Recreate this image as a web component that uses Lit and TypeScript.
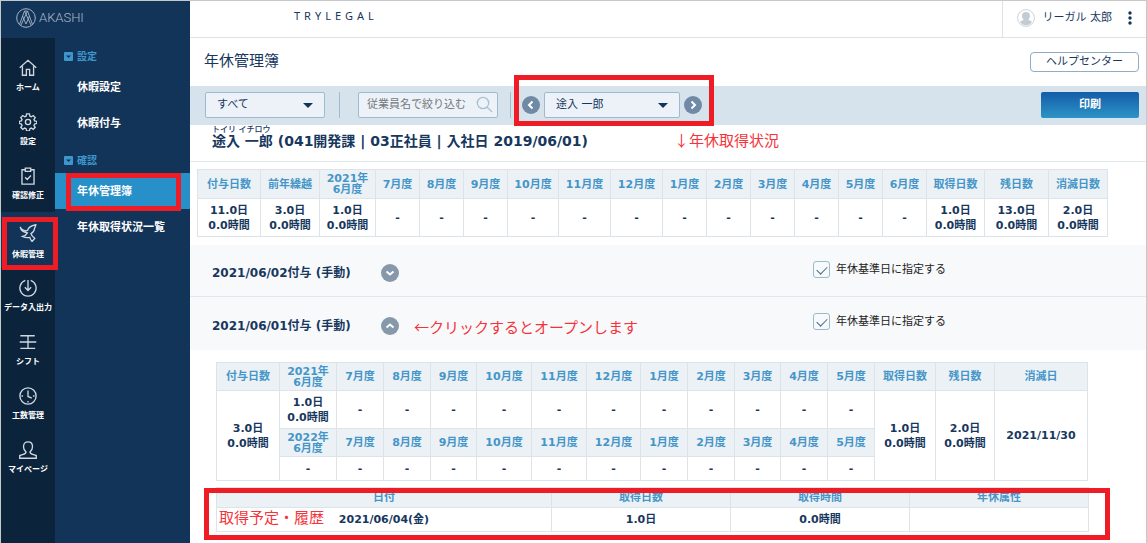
import { LitElement, html, css, svg, nothing } from "lit";
import { customElement, state } from "lit/decorators.js";
import { classMap } from "lit/directives/class-map.js";

interface NavItem {
  label: string;
  icon: unknown;
  active?: boolean;
  tall?: boolean;
}

const NAV: NavItem[] = [
  {
    label: "ホーム",
    icon: svg`<path d="M.8 9.800 10 1.500l9.200 8.300M3.800 8v10h4.400v-6.500h3.600V18h4.400V8"/>`,
  },
  {
    label: "設定",
    icon: svg`<circle cx="10" cy="10" r="2.900"/><path d="M8.400 1h3.200l.5 2.500 1.600.7 2.100-1.400 2.200 2.200-1.400 2.100.7 1.600 2.500.5v2.400l-2.500.6-.7 1.600 1.400 2.100-2.200 2.200-2.100-1.400-1.600.7-.5 2.400H8.400l-.5-2.400-1.600-.7-2.100 1.400-2.200-2.200 1.400-2.100-.7-1.600-2.400-.6V9.200l2.400-.5.7-1.600L2 5l2.200-2.200 2.100 1.400 1.600-.7z"/>`,
  },
  {
    label: "確認修正",
    tall: true,
    icon: svg`<path d="M7 3H3.300v16h13.400V3H13M7 1.200h6v3.600H7zM6.800 11.500l2.300 2.300 4.200-4.300"/>`,
  },
  {
    label: "休暇管理",
    tall: true,
    active: true,
    icon: svg`<path d="M1.300 3.200c1 2.600 3 3.800 6.400 4.600l2-1c.6-3.400 4-5 9-6-.3 2.200-1.200 2.800-1.500 4.500-.4 2.700-1.700 4.300-3.900 5.400.6 2.500 2 3.500 4.200 5.300l-3 3.500c-1.200-1-1.800-2.600-2.600-4.700-2.800.7-5.600.3-8-.9 2.300-.5 4.400-2.200 5.400-4.100C6 9.400 2.200 7.800 1.300 3.200z"/>`,
  },
  {
    label: "データ入出力",
    icon: svg`<path d="M7 1.500a9 9 0 1 0 6 0M10 1v11.500M6.500 9.200l3.500 3.500 3.500-3.500"/>`,
  },
  {
    label: "シフト",
    icon: svg`<path d="M1.500 3h16M.8 10h18.400M1.500 17h16.500M10 3v14"/>`,
  },
  {
    label: "工数管理",
    icon: svg`<circle cx="10" cy="10" r="9"/><path d="M10 3.800v6.700l4.200 1.800M2.800 10h1.700M15.500 10h1.700M10 15.500v1.700"/>`,
  },
  {
    label: "マイページ",
    icon: svg`<path d="M7.800 12.300C6 10.800 5 8.800 5 6.300 5 3 6.900 1 10 1s5 2 5 5.300c0 2.500-1 4.500-2.800 6 0 3 4.800 2.400 7 4v2.900H.8v-2.900c2.200-1.600 7-1 7-4z"/>`,
  },
];

const SUBMENU = [
  { title: "設定", items: ["休暇設定", "休暇付与"] },
  { title: "確認", items: ["年休管理簿", "年休取得状況一覧"] },
];

const DAY1 = ["1.0日", "0.0時間"];
const NONE = ["-"];

const SUMMARY: { head: string[]; value: string[]; width: number }[] = [
  { head: ["付与日数"], value: ["11.0日", "0.0時間"], width: 63 },
  { head: ["前年繰越"], value: ["3.0日", "0.0時間"], width: 59 },
  { head: ["2021年", "6月度"], value: DAY1, width: 56 },
  { head: ["7月度"], value: NONE, width: 44 },
  { head: ["8月度"], value: NONE, width: 44 },
  { head: ["9月度"], value: NONE, width: 44 },
  { head: ["10月度"], value: NONE, width: 51 },
  { head: ["11月度"], value: NONE, width: 52 },
  { head: ["12月度"], value: NONE, width: 52 },
  { head: ["1月度"], value: NONE, width: 44 },
  { head: ["2月度"], value: NONE, width: 44 },
  { head: ["3月度"], value: NONE, width: 44 },
  { head: ["4月度"], value: NONE, width: 44 },
  { head: ["5月度"], value: NONE, width: 44 },
  { head: ["6月度"], value: NONE, width: 44 },
  { head: ["取得日数"], value: DAY1, width: 58 },
  { head: ["残日数"], value: ["13.0日", "0.0時間"], width: 64 },
  { head: ["消滅日数"], value: ["2.0日", "0.0時間"], width: 59 },
];

const MONTHS = ["7月度", "8月度", "9月度", "10月度", "11月度", "12月度", "1月度", "2月度", "3月度", "4月度", "5月度"];
const DETAIL_WIDTHS = [63, 57, 47, 47, 46, 55, 55, 54, 47, 47, 46, 47, 47, 61, 59, 93];
const HISTORY_WIDTHS = [335, 179, 179, 179];

const lines = (parts: string[]) => parts.map((p, i) => html`${i ? html`<br />` : nothing}${p}`);
const cols = (widths: number[]) =>
  html`<colgroup>${widths.map((w) => html`<col style="width:${w}px" />`)}</colgroup>`;
const chevron = (d: string) =>
  html`<svg viewBox="0 0 18 18" width="18" height="18" aria-hidden="true"><circle cx="9" cy="9" r="9" /><path d=${d} /></svg>`;

@customElement("app-root")
export class AppRoot extends LitElement {
  @state() private open = true;

  static styles = css`
    :host {
      display: block;
      font-family: "DejaVu Sans", "Noto Sans CJK JP", sans-serif;
      font-size: 11px;
      line-height: 15px;
      color: #17375e;
    }
    * {
      box-sizing: border-box;
    }
    a {
      color: inherit;
      text-decoration: none;
    }
    button,
    input,
    select {
      font: inherit;
      color: inherit;
      margin: 0;
    }
    button {
      padding: 0;
      cursor: pointer;
    }
    svg {
      display: block;
    }
    .page {
      display: grid;
      grid-template-columns: 189px minmax(0, 1fr);
      min-height: 100vh;
      border: 1px solid #c6c8ca;
      background: #fff;
    }

    /* sidebar */
    .side {
      display: grid;
      grid-template: 37px 1fr / 54px 1fr;
      background: #123458;
      color: #fff;
    }
    .brand {
      grid-column: 1 / -1;
      display: flex;
      align-items: center;
      gap: 3px;
      padding-left: 15px;
      padding-bottom: 3px;
      font: 300 13px/20px Roboto, sans-serif;
      color: #a9b7c6;
    }
    .brand svg,
    .rail svg {
      fill: none;
      stroke: currentColor;
    }
    .rail {
      background: #0c233c;
      padding-top: 10px;
    }
    .rail a {
      display: flex;
      flex-direction: column;
      align-items: center;
      gap: 5px;
      height: 54px;
      padding-top: 11px;
      font-size: 8px;
      line-height: 12px;
      font-weight: 700;
      white-space: nowrap;
    }
    .rail a.tall {
      height: 56px;
      position: relative;
    }
    .rail a.active {
      background: #123458;
      padding-top: 12px;
      gap: 7px;
    }
    .rail svg {
      stroke-width: 1.5;
      color: #cfd8e0;
    }
    .menu {
      font-weight: 700;
    }
    .group {
      display: flex;
      align-items: center;
      gap: 4px;
      height: 37px;
      padding-left: 9px;
      color: #3f96cd;
      font-size: 10px;
    }
    .group + a {
      margin-top: -6px;
    }
    .menu a {
      display: flex;
      align-items: center;
      height: 36px;
      padding-left: 22px;
      position: relative;
    }
    .menu section + section .group {
      height: 39px;
    }
    .menu a.current {
      margin-top: -7px;
      background: #2890c8;
    }

    /* markers */
    .ring {
      position: absolute;
      border: 5px solid #ee1c25;
      pointer-events: none;
      z-index: 2;
    }
    .ring.nav {
      inset: 5px -3px -2px 1px;
    }
    .ring.sub {
      inset: 0 9px -2px 11px;
    }
    .ring.pick {
      inset: -17px -12px -8px -8px;
    }
    .ring.hist {
      inset: 1px -22px -8px -12px;
    }
    .note {
      font-size: 15px;
      line-height: 20px;
      font-weight: 400;
      color: #f5333a;
      font-family: "Noto Sans CJK JP", sans-serif;
      white-space: nowrap;
    }

    /* header */
    .top {
      display: flex;
      justify-content: space-between;
      height: 37px;
      border-bottom: 1px solid #dfe2e5;
    }
    .company {
      padding: 7px 0 0 104px;
      letter-spacing: 4px;
      font-family: "Noto Sans", sans-serif;
      font-size: 11px;
    }
    .user {
      display: flex;
      align-items: center;
      gap: 8px;
      padding: 0 14px 3px;
      border-left: 1px solid #dfe2e5;
    }
    .more {
      border: 0;
      background: none;
      padding-left: 8px;
    }
    .title {
      display: flex;
      justify-content: space-between;
      align-items: center;
      height: 48px;
      padding: 0 7px 0 14px;
    }
    h1 {
      margin: 0;
      padding-bottom: 3px;
      font-size: 15px;
      line-height: 20px;
      font-weight: 400;
    }
    .help {
      display: block;
      width: 109px;
      height: 20px;
      border: 1px solid #8fadc4;
      border-radius: 4px;
      text-align: center;
      line-height: 17px;
    }
    .bar {
      display: flex;
      align-items: center;
      height: 39px;
      padding: 0 7px 2px 15px;
      background: #d6e3ec;
    }
    .field {
      position: relative;
      display: flex;
      width: 120px;
      height: 26px;
    }
    .field.wide {
      width: 136px;
    }
    .field.search {
      width: 140px;
    }
    .field select,
    .field input {
      appearance: none;
      width: 100%;
      height: 100%;
      padding: 0 11px;
      border: 1px solid #9fbace;
      border-radius: 2px;
      background: #ecf2f7;
    }
    .field input {
      padding: 0 8px;
    }
    .field input::placeholder {
      color: #75797d;
      opacity: 1;
    }
    .field svg {
      position: absolute;
      right: 12px;
      top: 11px;
      pointer-events: none;
    }
    .field.search svg {
      right: 5px;
      top: 4px;
    }
    .rule {
      width: 1px;
      height: 26px;
      margin: 0 18px 0 14px;
      background: #a3bccd;
    }
    .rule.second {
      margin: 0 11px 0 12px;
    }
    .picker {
      position: relative;
      display: flex;
      align-items: center;
      gap: 4px;
    }
    .round {
      border: 0;
      border-radius: 50%;
      background: none;
      fill: #708aa5;
    }
    .round path {
      fill: none;
      stroke: #fff;
      stroke-width: 2;
    }
    .print {
      width: 98px;
      height: 26px;
      margin-left: auto;
      border: 0;
      border-radius: 2px;
      background: linear-gradient(#145ca9, #2c94c6);
      color: #fff;
      font-weight: 700;
    }

    /* employee */
    .person {
      display: flex;
      align-items: flex-start;
      gap: 86px;
      height: 37px;
      padding-left: 22px;
      border-bottom: 1px solid #e0eaec;
    }
    .person .note {
      padding-top: 5px;
    }
    .kana {
      font-size: 8px;
      line-height: 8px;
      font-weight: 500;
      padding-top: 1px;
    }
    h2,
    h3 {
      margin: 0;
      font-size: 14px;
      line-height: 15px;
      font-weight: 700;
      white-space: nowrap;
    }
    table {
      width: 100%;
      table-layout: fixed;
      border-collapse: collapse;
      font-weight: 700;
      text-align: center;
    }
    th,
    td {
      padding: 0;
      border: 1px solid #dde4e9;
      white-space: nowrap;
    }
    th {
      height: 29px;
      background: #ecf1f6;
      color: #4596c8;
      line-height: 11px;
    }
    td {
      height: 38px;
    }
    .short td {
      height: 24px;
    }
    .summary {
      padding: 7px 41px 8px 7px;
    }

    /* grants */
    .grant {
      display: grid;
      grid-template-columns: 623fr 333fr;
      height: 51px;
      padding-top: 5px;
      background: #f8f9fb;
    }
    .grant + .grant {
      border-top: 1px solid #e3e6ea;
      height: 54px;
    }
    .head {
      display: flex;
      align-items: center;
      padding-left: 22px;
    }
    h3 {
      width: 169px;
      font-size: 12px;
    }
    .head .note {
      padding-left: 15px;
      padding-top: 2px;
    }
    .grant .round {
      fill: #8798ab;
    }
    .base {
      display: flex;
      align-items: center;
      align-self: start;
      gap: 6px;
      padding-top: 11px;
      color: #222;
    }
    .base input {
      appearance: none;
      width: 17px;
      height: 17px;
      border: 1px solid #9db9cc;
      border-radius: 3px;
      background: #f6fafc;
      display: grid;
      place-items: center;
    }
    .base input:checked::before {
      content: "";
      width: 9px;
      height: 5px;
      margin-bottom: 2px;
      border: solid #4c6a86;
      border-width: 0 0 1px 1px;
      transform: rotate(-45deg);
    }
    .detail {
      padding: 12px 58px 12px 26px;
    }
    .detail th {
      height: 28px;
    }
    .history {
      position: relative;
      margin-top: 6px;
    }
    .history th {
      height: 20px;
    }
    .history .note {
      position: absolute;
      left: 3px;
      bottom: 5px;
    }
  `;

  private renderSide() {
    return html`<aside class="side">
      <a class="brand" href="#">
        <svg width="20" height="20" viewBox="0 0 20 20" aria-hidden="true">
          <circle cx="10" cy="10" r="9.300" />
          <path d="M3.500 16.500 8.500 3h3l5 13.500M8.500 3l6.500 14M11.500 3 5 17M6.500 8l3.500 8 3.500-8" stroke-width=".9" />
        </svg>
        AKASHI
      </a>
      <nav class="rail">
        ${NAV.map(
          (n) => html`<a href="#" class=${classMap({ tall: !!n.tall, active: !!n.active })}>
            <svg width="18" height="18" viewBox="0 0 20 20" aria-hidden="true">${n.icon}</svg>
            ${n.label}${n.active ? html`<span class="ring nav"></span>` : nothing}
          </a>`
        )}
      </nav>
      <nav class="menu">
        ${SUBMENU.map(
          (g) => html`<section>
            <div class="group">
              <svg width="9" height="9" viewBox="0 0 9 9" aria-hidden="true">
                <rect width="9" height="9" rx="1" fill="#3f96cd" />
                <path d="M2 3.500h5L4.500 6z" fill="#123458" />
              </svg>
              ${g.title}
            </div>
            ${g.items.map((label) => {
              const current = label === "年休管理簿";
              return html`<a href="#" class=${classMap({ current })}
                >${label}${current ? html`<span class="ring sub"></span>` : nothing}</a
              >`;
            })}
          </section>`
        )}
      </nav>
    </aside>`;
  }

  private caret() {
    return html`<svg width="10" height="5" viewBox="0 0 10 5" aria-hidden="true"><path d="M0 0h10L5 5z" fill="#12345a" /></svg>`;
  }

  private renderBar() {
    return html`<div class="bar">
      <div class="field">
        <select aria-label="表示対象"><option>すべて</option></select>${this.caret()}
      </div>
      <span class="rule"></span>
      <div class="field search">
        <input type="text" aria-label="従業員名" placeholder="従業員名で絞り込む" />
        <svg width="17" height="17" viewBox="0 0 17 17" fill="none" stroke="#a9c0d0" stroke-width="1.300" aria-hidden="true">
          <circle cx="7" cy="7" r="5.700" /><path d="m11 11 5 5" />
        </svg>
      </div>
      <span class="rule second"></span>
      <div class="picker">
        <button class="round" aria-label="前の従業員">${chevron("M10.500 5.500 7 9l3.500 3.500")}</button>
        <div class="field wide">
          <select aria-label="従業員"><option>途入 一郎</option></select>${this.caret()}
        </div>
        <button class="round" aria-label="次の従業員">${chevron("M7.500 5.500 11 9l-3.500 3.500")}</button>
        <span class="ring pick"></span>
      </div>
      <button class="print">印刷</button>
    </div>`;
  }

  private renderGrant(date: string, opened: boolean, toggle?: () => void) {
    return html`<div class="grant">
      <div class="head">
        <h3>${date}付与 (手動)</h3>
        <button class="round" aria-label="開閉" aria-expanded=${opened} @click=${toggle}>
          ${chevron(opened ? "M5.500 10.500 9 7.500l3.500 3" : "M5.500 7.500 9 10.500l3.500-3")}
        </button>
        ${toggle ? html`<span class="note">←クリックするとオープンします</span>` : nothing}
      </div>
      <label class="base"><input type="checkbox" checked />年休基準日に指定する</label>
    </div>`;
  }

  private renderDetail() {
    return html`<div class="detail">
      <table>
        ${cols(DETAIL_WIDTHS)}
        <tr>
          <th>付与日数</th>
          <th>2021年<br />6月度</th>
          ${MONTHS.map((m) => html`<th>${m}</th>`)}
          <th>取得日数</th>
          <th>残日数</th>
          <th>消滅日</th>
        </tr>
        <tr>
          <td rowspan="3">3.0日<br />0.0時間</td>
          <td>1.0日<br />0.0時間</td>
          ${MONTHS.map(() => html`<td>-</td>`)}
          <td rowspan="3">1.0日<br />0.0時間</td>
          <td rowspan="3">2.0日<br />0.0時間</td>
          <td rowspan="3">2021/11/30</td>
        </tr>
        <tr>
          <th>2022年<br />6月度</th>
          ${MONTHS.map((m) => html`<th>${m}</th>`)}
        </tr>
        <tr class="short">
          <td>-</td>
          ${MONTHS.map(() => html`<td>-</td>`)}
        </tr>
      </table>
      <div class="history">
        <table>
          ${cols(HISTORY_WIDTHS)}
          <tr>
            <th>日付</th>
            <th>取得日数</th>
            <th>取得時間</th>
            <th>年休属性</th>
          </tr>
          <tr class="short">
            <td>2021/06/04(金)</td>
            <td>1.0日</td>
            <td>0.0時間</td>
            <td></td>
          </tr>
        </table>
        <span class="note">取得予定・履歴</span>
        <span class="ring hist"></span>
      </div>
    </div>`;
  }

  render() {
    return html`<div class="page">
      ${this.renderSide()}
      <main>
        <header class="top">
          <div class="company">TRYLEGAL</div>
          <div class="user">
            <svg width="18" height="18" viewBox="0 0 18 18" aria-hidden="true">
              <circle cx="9" cy="9" r="8.400" fill="#fff" stroke="#ccd3d9" />
              <path d="M9 3c2.600 0 4 1.600 4 3.800 0 1.500-.6 2.800-1.600 3.700.2 1 2.400 1.200 3.600 2.300A7.600 7.600 0 0 1 9 16.500a7.600 7.600 0 0 1-6-3.700c1.200-1.100 3.400-1.300 3.600-2.300C5.600 9.600 5 8.300 5 6.800 5 4.600 6.400 3 9 3z" fill="#c3ccd4" />
            </svg>
            リーガル 太郎
            <button class="more" aria-label="メニュー">
              <svg width="4" height="14" viewBox="0 0 4 14" fill="#12345a" aria-hidden="true">
                <circle cx="2" cy="2" r="1.700" /><circle cx="2" cy="7" r="1.700" /><circle cx="2" cy="12" r="1.700" />
              </svg>
            </button>
          </div>
        </header>
        <div class="title">
          <h1>年休管理簿</h1>
          <a class="help" href="#">ヘルプセンター</a>
        </div>
        ${this.renderBar()}
        <div class="person">
          <div>
            <div class="kana">トイリ イチロウ</div>
            <h2>途入 一郎 (041開発課 | 03正社員 | 入社日 2019/06/01)</h2>
          </div>
          <span class="note">↓年休取得状況</span>
        </div>
        <div class="summary">
          <table>
            ${cols(SUMMARY.map((c) => c.width))}
            <tr>${SUMMARY.map((c) => html`<th>${lines(c.head)}</th>`)}</tr>
            <tr>${SUMMARY.map((c) => html`<td>${lines(c.value)}</td>`)}</tr>
          </table>
        </div>
        ${this.renderGrant("2021/06/02", false)}
        ${this.renderGrant("2021/06/01", this.open, () => (this.open = !this.open))}
        ${this.open ? this.renderDetail() : nothing}
      </main>
    </div>`;
  }
}
